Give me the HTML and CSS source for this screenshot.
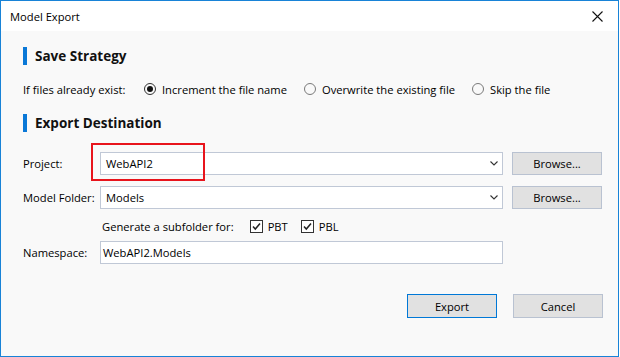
FILE: index.html
```html
<!DOCTYPE html>
<html lang="en">
<head>
    <meta charset="UTF-8">
    <title>Model Export</title>
    <link rel="stylesheet" href="styles.css">
</head>
<body>
    <div class="window">
        <div class="titlebar">
            <span class="title">Model Export</span>
            <svg class="close" width="11" height="11" viewBox="0 0 11 11">
                <path d="M0.5 0.5L10.5 10.5M10.5 0.5L0.5 10.5" stroke="#111" stroke-width="1.1" fill="none"/>
            </svg>
        </div>
        <div class="content">
            <div class="section-title first">Save Strategy</div>
            <div class="strategy-row">
                <span class="row-label">If files already exist:</span>
                <label class="radio checked"><span class="radio-mark"></span>Increment the file name</label>
                <label class="radio"><span class="radio-mark"></span>Overwrite the existing file</label>
                <label class="radio"><span class="radio-mark"></span>Skip the file</label>
            </div>

            <div class="section-title">Export Destination</div>
            <div class="form-row row-project">
                <span class="field-label">Project:</span>
                <div class="combo highlighted">
                    <span class="combo-text">WebAPI2</span>
                    <svg class="chevron" width="8" height="5" viewBox="0 0 8 5">
                        <path d="M0.5 0.5L4 4L7.5 0.5" stroke="#333" stroke-width="1.1" fill="none"/>
                    </svg>
                    <span class="highlight-box"></span>
                </div>
                <button class="btn browse">Browse...</button>
            </div>
            <div class="form-row row-folder">
                <span class="field-label">Model Folder:</span>
                <div class="combo">
                    <span class="combo-text">Models</span>
                    <svg class="chevron" width="8" height="5" viewBox="0 0 8 5">
                        <path d="M0.5 0.5L4 4L7.5 0.5" stroke="#333" stroke-width="1.1" fill="none"/>
                    </svg>
                </div>
                <button class="btn browse">Browse...</button>
            </div>
            <div class="subfolder-row">
                <span class="subfolder-label">Generate a subfolder for:</span>
                <label class="check"><span class="check-box"><svg width="11" height="11" viewBox="0 0 11 11"><path d="M2 5.5L4.3 8L9 2.5" stroke="#222" stroke-width="1.5" fill="none"/></svg></span>PBT</label>
                <label class="check"><span class="check-box"><svg width="11" height="11" viewBox="0 0 11 11"><path d="M2 5.5L4.3 8L9 2.5" stroke="#222" stroke-width="1.5" fill="none"/></svg></span>PBL</label>
            </div>
            <div class="form-row row-namespace">
                <span class="field-label">Namespace:</span>
                <div class="textbox">WebAPI2.Models</div>
            </div>

            <div class="actions">
                <button class="btn btn-default">Export</button>
                <button class="btn">Cancel</button>
            </div>
        </div>
    </div>
</body>
</html>
```

FILE: styles.css
```css
body {
    margin: 0;
    background: #ffffff;
    font-family: 'Open Sans', 'Noto Sans', sans-serif;
    font-size: 11.2px;
    color: #000000;
}
.window {
    width: 619px;
    height: 357px;
    box-sizing: border-box;
    border: 1px solid #1883d7;
    background: #f9f9f9;
    display: flex;
    flex-direction: column;
}
.titlebar {
    height: 30px;
    background: #ffffff;
    display: flex;
    align-items: center;
    justify-content: space-between;
    padding: 0 15px 0 9px;
}
.title {
    font-size: 11.2px;
    color: #000;
}
.close {
    margin-top: 1px;
}
.content {
    padding: 0 15px 0 22px;
}
.section-title {
    height: 18px;
    line-height: 18px;
    border-left: 4px solid #0a78d7;
    padding-left: 8px;
    font-weight: 700;
    font-size: 13.5px;
    color: #111;
    margin-top: 14px;
}
.section-title.first {
    margin-top: 16px;
}
.strategy-row {
    height: 22px;
    margin-top: 13px;
    display: flex;
    align-items: center;
    gap: 17px;
}
.row-label {
    width: 104px;
}
.radio {
    display: flex;
    align-items: center;
}
.radio-mark {
    width: 12px;
    height: 12px;
    box-sizing: border-box;
    border: 1px solid #7a7a7a;
    border-radius: 50%;
    margin-right: 6px;
    display: flex;
    align-items: center;
    justify-content: center;
}
.radio.checked .radio-mark {
    border-color: #333;
}
.radio.checked .radio-mark::after {
    content: "";
    width: 6px;
    height: 6px;
    border-radius: 50%;
    background: #111;
}
.form-row {
    display: flex;
    align-items: center;
}
.row-project {
    margin-top: 20px;
}
.row-folder {
    margin-top: 11px;
}
.row-namespace {
    margin-top: 5px;
}
.field-label {
    width: 77px;
}
.combo, .textbox {
    width: 403px;
    height: 23px;
    box-sizing: border-box;
    border: 1px solid #c0c8d6;
    background: #ffffff;
    display: flex;
    align-items: center;
}
.combo {
    position: relative;
    padding: 0 4px 0 5px;
    justify-content: space-between;
}
.textbox {
    padding-left: 2px;
}
.highlight-box {
    position: absolute;
    left: -10px;
    top: -10px;
    width: 114px;
    height: 38px;
    box-sizing: border-box;
    border: 2px solid #e8141c;
}
.btn {
    width: 90px;
    height: 24px;
    box-sizing: border-box;
    border: 1px solid #b9c2d1;
    background: #e1e1e1;
    font-family: inherit;
    font-size: 11.2px;
    color: #000;
    padding: 0;
}
.browse {
    height: 23px;
    margin-left: 9px;
}
.subfolder-row {
    height: 20px;
    margin-top: 7px;
    padding-left: 79px;
    display: flex;
    align-items: center;
}
.subfolder-label {
    margin-right: 16px;
}
.check {
    display: flex;
    align-items: center;
    margin-right: 13px;
}
.check-box {
    width: 13px;
    height: 13px;
    box-sizing: border-box;
    border: 1px solid #333;
    background: #fff;
    margin-right: 5px;
    display: flex;
    align-items: center;
    justify-content: center;
}
.actions {
    margin-top: 30px;
    display: flex;
    justify-content: flex-end;
    gap: 16px;
}
.btn-default {
    border-color: #0078d7;
}
```
